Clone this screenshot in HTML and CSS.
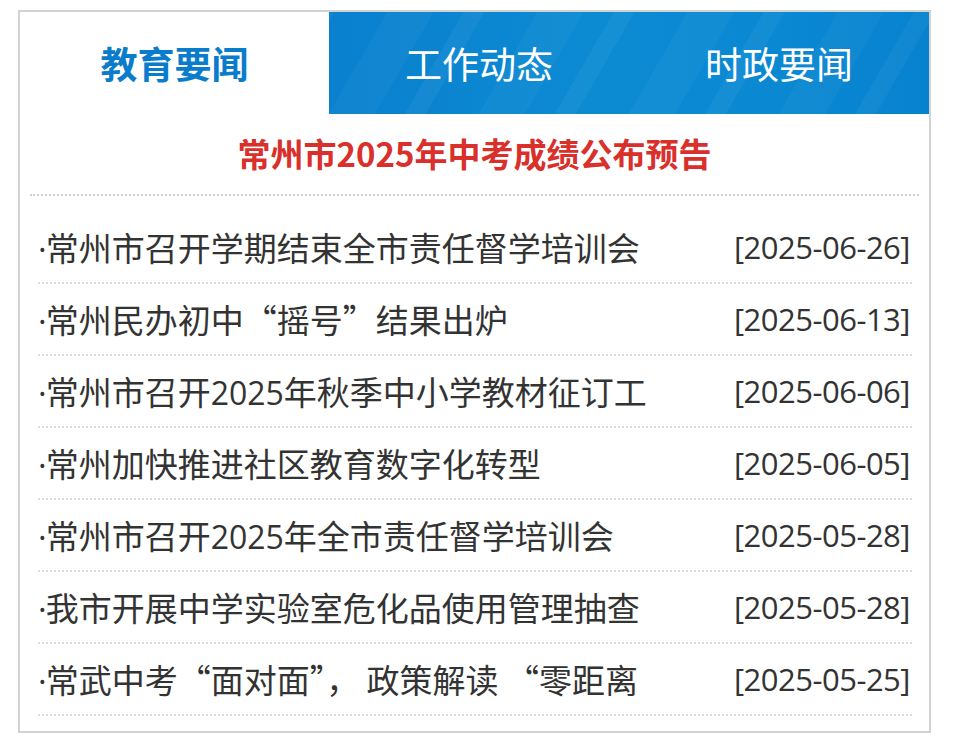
FILE: index.html
```html
<!DOCTYPE html>
<html lang="zh-CN">
<head>
<meta charset="utf-8">
<title>教育要闻</title>
<link rel="stylesheet" href="styles.css">
</head>
<body>
<div class="box">
  <div class="tabs">
    <div class="tab active">教育要闻</div>
    <div class="tab-group">
      <div class="tab">工作动态</div>
      <div class="tab">时政要闻</div>
    </div>
  </div>
  <div class="headline">常州市2025年中考成绩公布预告</div>
  <ul class="list">
    <li><span class="t"><span class="dot">·</span>常州市召开学期结束全市责任督学培训会</span><span class="d">[2025-06-26]</span></li>
    <li><span class="t"><span class="dot">·</span>常州民办初中“摇号”结果出炉</span><span class="d">[2025-06-13]</span></li>
    <li><span class="t"><span class="dot">·</span>常州市召开<span class="n">2025</span>年秋季中小学教材征订工</span><span class="d">[2025-06-06]</span></li>
    <li><span class="t"><span class="dot">·</span>常州加快推进社区教育数字化转型</span><span class="d">[2025-06-05]</span></li>
    <li><span class="t"><span class="dot">·</span>常州市召开<span class="n">2025</span>年全市责任督学培训会</span><span class="d">[2025-05-28]</span></li>
    <li><span class="t"><span class="dot">·</span>我市开展中学实验室危化品使用管理抽查</span><span class="d">[2025-05-28]</span></li>
    <li><span class="t"><span class="dot">·</span>常武中考“面对面”， 政策解读 “零距离</span><span class="d">[2025-05-25]</span></li>
  </ul>
</div>
</body>
</html>
```
FILE: styles.css
```css
* { box-sizing: border-box; }
html, body { margin: 0; padding: 0; background: #fff; }
body { font-family: "Noto Sans CJK SC", "Noto Sans", sans-serif; color: #333; }
.box {
  margin: 10px 0 0 18px;
  width: 913px;
  height: 723px;
  border: 2px solid #d2d2d2;
}
.tabs { display: flex; height: 102px; }
.tab {
  display: flex; align-items: center; justify-content: center;
  font-size: 37px; color: #fff; height: 102px;
}
.tab.active { width: 309px; color: #0a7ccc; font-weight: bold; background: #fff; }
.tab-group {
  flex: 1; display: flex;
  background:
    repeating-linear-gradient(-60deg, rgba(255,255,255,0) 0px, rgba(255,255,255,0) 46px, rgba(255,255,255,0.045) 46px, rgba(255,255,255,0.045) 64px, rgba(255,255,255,0) 64px, rgba(255,255,255,0) 90px, rgba(255,255,255,0.03) 90px, rgba(255,255,255,0.03) 130px),
    linear-gradient(90deg, #0a80ce 0%, #0c8bd3 45%, #0a88d2 75%, #0782cf 100%);
}
.tab-group .tab { flex: 1; }
.headline {
  margin: 0 10px;
  height: 82px;
  border-bottom: 2px dotted #cfcfcf;
  display: flex; align-items: center; justify-content: center;
  color: #d9302c; font-weight: bold; font-size: 33px;
  padding-bottom: 2px;
}
.list { list-style: none; margin: 16px 17px 0 18px; padding: 0; }
.list li {
  height: 72px;
  display: flex; align-items: center; justify-content: space-between;
  border-bottom: 2px dotted #dcdcdc;
  font-size: 33px;
  padding: 0 2px 0 0;
}
.list .t { white-space: nowrap; }
.list .dot { font-family: "Open Sans", sans-serif; margin-right: -1px; }
.list .n { font-family: "Open Sans", sans-serif; font-size: 32px; }
.list .d { white-space: nowrap; font-family: "Open Sans", sans-serif; font-size: 31px; letter-spacing: -0.5px; }
```
